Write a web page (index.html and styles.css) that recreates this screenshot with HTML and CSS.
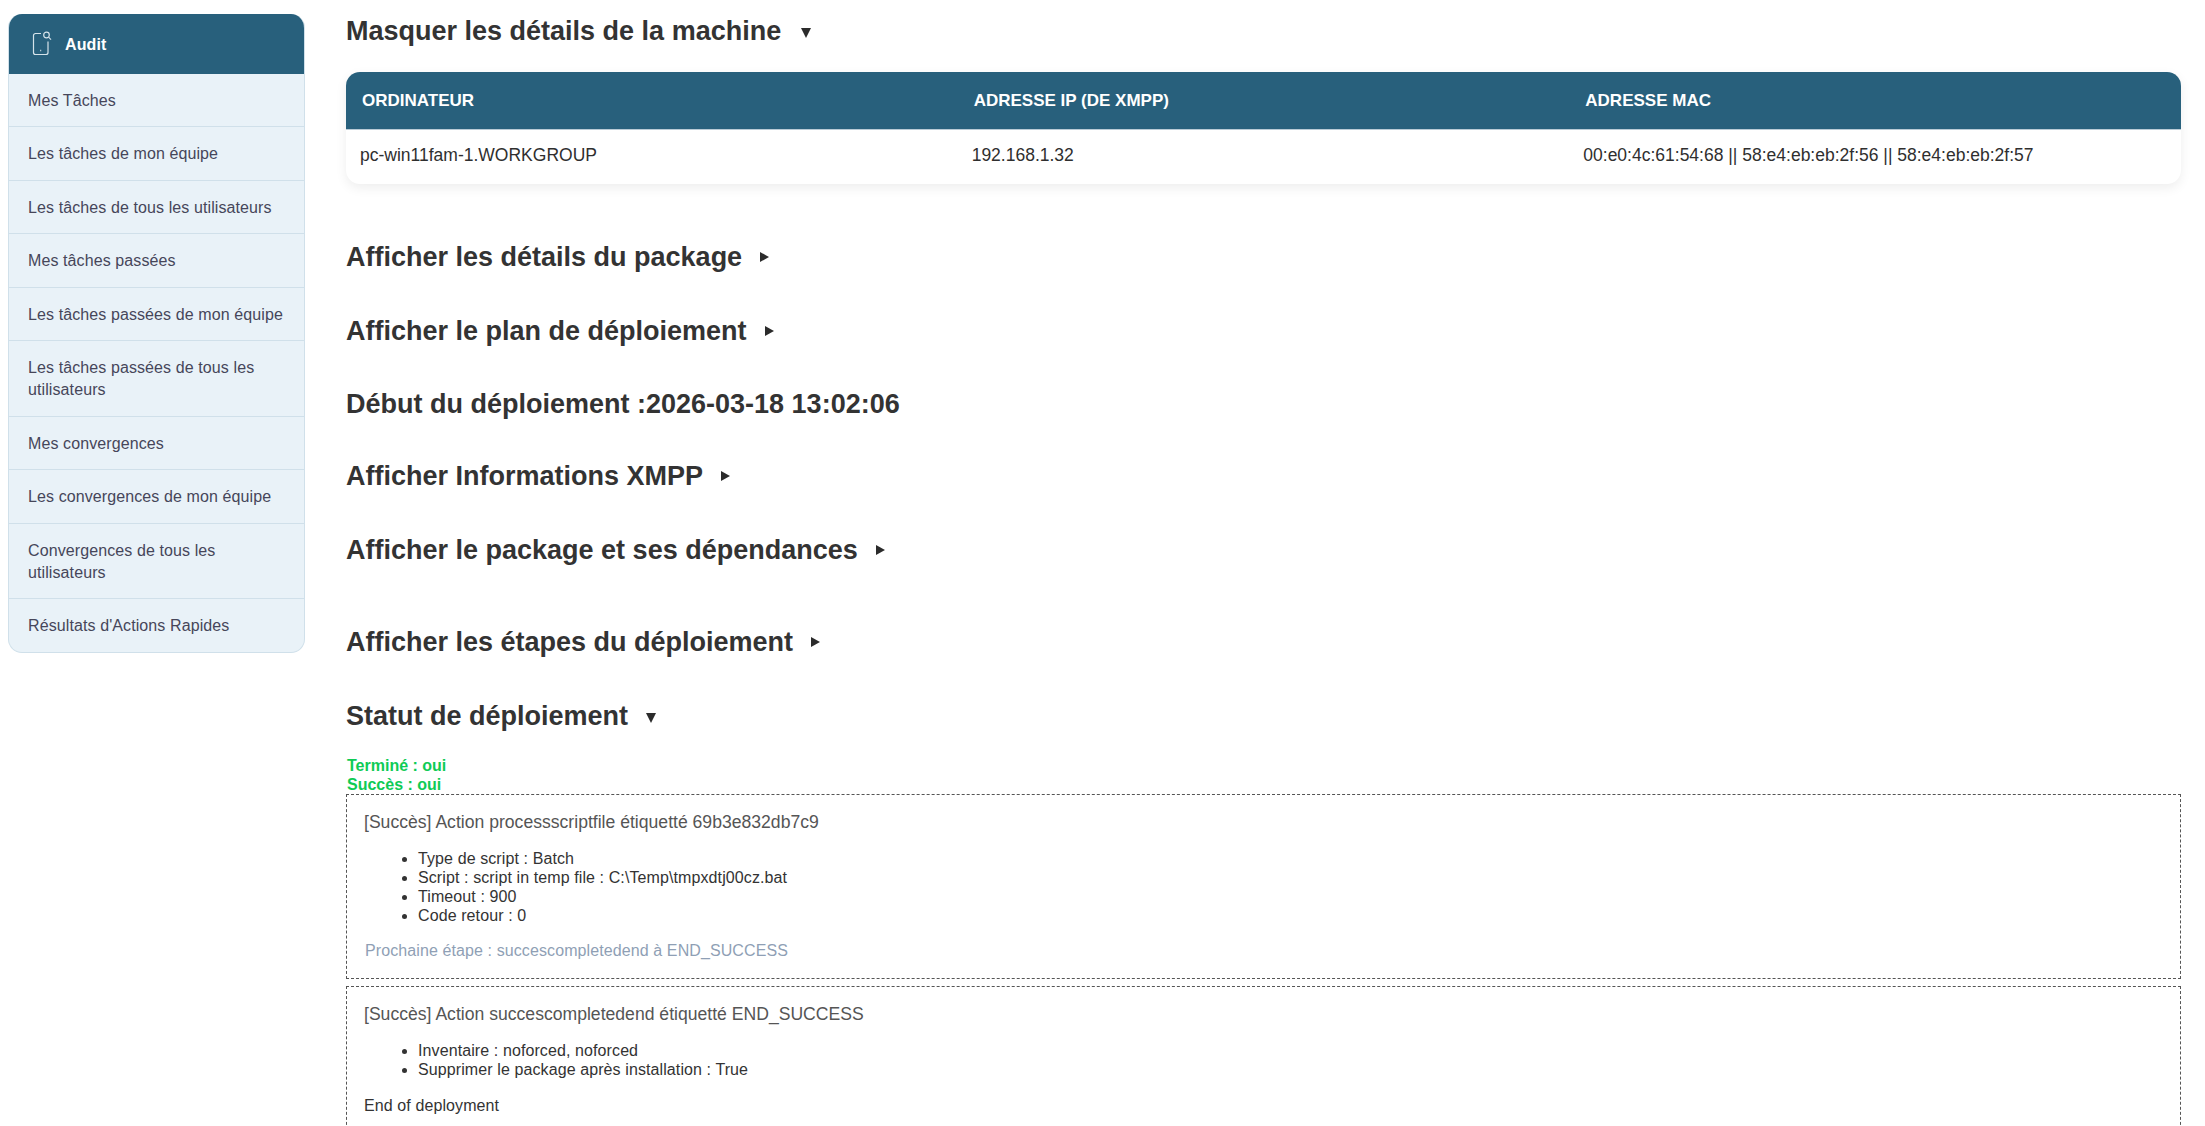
FILE: index.html
```html
<!DOCTYPE html>
<html lang="fr">
<head>
<meta charset="utf-8">
<title>Audit</title>
<link rel="stylesheet" href="styles.css">
</head>
<body>
<div class="page">
  <aside class="sidebar">
    <div class="side-head">
      <svg class="side-icon" width="20" height="26" viewBox="0 0 20 26" fill="none" stroke="#d5e3ea" stroke-width="1.2">
        <path d="M9 2.5H3.5A2 2 0 0 0 1.5 4.5V21.5A2 2 0 0 0 3.5 23.5H14A2 2 0 0 0 16 21.5V10.5"/>
        <circle cx="14.5" cy="4" r="2.8"/>
        <path d="M16.6 6.2L19 8.6"/>
        <path d="M8.2 19.6h1" stroke-width="1.5"/>
      </svg>
      <span>Audit</span>
    </div>
    <nav class="side-list">
      <a class="side-item">Mes Tâches</a>
      <a class="side-item">Les tâches de mon équipe</a>
      <a class="side-item">Les tâches de tous les utilisateurs</a>
      <a class="side-item">Mes tâches passées</a>
      <a class="side-item">Les tâches passées de mon équipe</a>
      <a class="side-item">Les tâches passées de tous les utilisateurs</a>
      <a class="side-item">Mes convergences</a>
      <a class="side-item">Les convergences de mon équipe</a>
      <a class="side-item">Convergences de tous les utilisateurs</a>
      <a class="side-item">Résultats d'Actions Rapides</a>
    </nav>
  </aside>
  <main class="main">
    <h3 class="title first">Masquer les détails de la machine<span class="caret open"></span></h3>
    <div class="table-card">
      <table class="machine">
        <thead>
          <tr><th>ORDINATEUR</th><th>ADRESSE IP (DE XMPP)</th><th>ADRESSE MAC</th></tr>
        </thead>
        <tbody>
          <tr><td>pc-win11fam-1.WORKGROUP</td><td>192.168.1.32</td><td>00:e0:4c:61:54:68 || 58:e4:eb:eb:2f:56 || 58:e4:eb:eb:2f:57</td></tr>
        </tbody>
      </table>
    </div>
    <h3 class="title t-package">Afficher les détails du package<span class="caret"></span></h3>
    <h3 class="title t-plan">Afficher le plan de déploiement<span class="caret"></span></h3>
    <h3 class="title t-start">Début du déploiement :2026-03-18 13:02:06</h3>
    <h3 class="title t-xmpp">Afficher Informations XMPP<span class="caret"></span></h3>
    <h3 class="title t-deps">Afficher le package et ses dépendances<span class="caret"></span></h3>
    <h3 class="title t-steps">Afficher les étapes du déploiement<span class="caret"></span></h3>
    <h3 class="title t-status">Statut de déploiement<span class="caret open"></span></h3>
    <div class="status">
      <div>Terminé : oui</div>
      <div>Succès : oui</div>
    </div>
    <section class="step">
      <div class="step-title">[Succès] Action processscriptfile étiquetté 69b3e832db7c9</div>
      <ul class="step-list">
        <li>Type de script : Batch</li>
        <li>Script : script in temp file : C:\Temp\tmpxdtj00cz.bat</li>
        <li>Timeout : 900</li>
        <li>Code retour : 0</li>
      </ul>
      <div class="step-next">Prochaine étape : succescompletedend à END_SUCCESS</div>
    </section>
    <section class="step last">
      <div class="step-title">[Succès] Action succescompletedend étiquetté END_SUCCESS</div>
      <ul class="step-list">
        <li>Inventaire : noforced, noforced</li>
        <li>Supprimer le package après installation : True</li>
      </ul>
      <div class="step-end">End of deployment</div>
    </section>
  </main>
</div>
</body>
</html>
```
FILE: styles.css
```css
* { box-sizing: border-box; }
html, body { margin: 0; padding: 0; height: 1126px; overflow: hidden; background: #fff; }
body { font-family: "Liberation Sans", Arial, sans-serif; font-size: 16px; line-height: 1.42857; color: #333; }
.page { display: flex; align-items: flex-start; height: 1126px; overflow: hidden; }

.sidebar { width: 297px; margin: 14px 0 0 8px; flex: none; border-radius: 14px; overflow: hidden; background: #e9f2f8; border: 1px solid #d0e0ea; border-top: 0; }
.side-head { height: 60px; margin: 0 -1px; background: #28607c; color: #fff; font-weight: 700; display: flex; align-items: center; padding: 2px 0 0 24px; gap: 13px; letter-spacing: .1px; }
.side-icon { flex: none; margin-top: -2px; }
.side-list { display: flex; flex-direction: column; }
.side-item { display: block; padding: 16px 19px 14px; color: #46465a; line-height: 22.4px; letter-spacing: .1px; border-bottom: 1px solid #d0e0ea; }
.side-item:last-child { border-bottom: 0; }

.main { width: 1835px; margin-left: 41px; flex: none; }
.title { margin: 0; font-size: 27px; line-height: 32px; font-weight: 700; color: #333; display: flex; align-items: center; }
.first { margin-top: 15px; }
.t-package { margin-top: 57px; }
.t-plan { margin-top: 42px; }
.t-start { margin-top: 41px; }
.t-xmpp { margin-top: 40px; }
.t-deps { margin-top: 42px; }
.t-steps { margin-top: 60px; }
.t-status { margin-top: 42px; }
.caret { margin-left: 18px; width: 0; height: 0; border-style: solid; border-color: transparent; border-width: 5px 0 5px 9px; border-left-color: #2b2b2b; }
.caret.open { border-width: 10px 5.5px 0 5.5px; border-color: #2b2b2b transparent transparent transparent; margin: 3px 0 0 20px; }
.t-status .caret.open { margin-left: 18px; }

.table-card { margin-top: 25px; height: 112px; border-radius: 14px; box-shadow: 0 4px 12px rgba(0,0,0,.07); overflow: hidden; background: #fff; }
.machine { width: 100%; border-collapse: collapse; table-layout: fixed; }
.machine th { height: 57px; background: #28607c; color: #fff; font-size: 17px; font-weight: 700; text-align: left; padding: 1px 16px 0; border-bottom: 1px solid #b9cbd6; }
.machine td { height: 53px; padding: 0 14px; color: #2f2f2f; font-size: 17.5px; }

.status { margin-top: 24px; margin-left: 1px; color: #0ecb55; font-weight: 700; line-height: 19px; }
.step { border: 1px dashed #555; padding: 14px 17px 0; height: 185px; margin-bottom: 7px; }
.step.last { height: 300px; margin-bottom: 0; }
.step-title { color: #555; font-size: 17.6px; line-height: 26px; }
.step-list { margin: 14px 0 0; padding-left: 54px; line-height: 19px; color: #333; letter-spacing: .1px; }
.step-next { margin: 16px 0 0 1px; color: #8f9fb5; line-height: 19px; letter-spacing: .1px; }
.step-end { margin-top: 17px; color: #333; line-height: 19px; letter-spacing: .1px; }
```
